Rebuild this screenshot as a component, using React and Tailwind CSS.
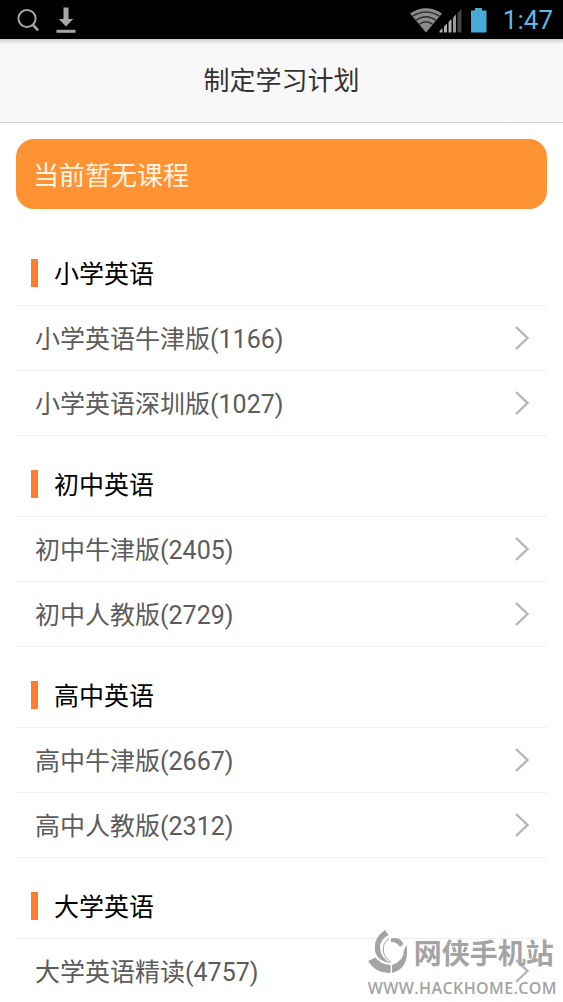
const sections = [
  { title: '小学英语', courses: ['小学英语牛津版(1166)', '小学英语深圳版(1027)'] },
  { title: '初中英语', courses: ['初中牛津版(2405)', '初中人教版(2729)'] },
  { title: '高中英语', courses: ['高中牛津版(2667)', '高中人教版(2312)'] },
  { title: '大学英语', courses: ['大学英语精读(4757)'] },
];

function StatusBar() {
  return (
    <div className="flex h-[39px] shrink-0 items-center justify-between bg-black pr-[10px] pl-[16px]">
      <div className="flex items-center gap-[16px] text-[#a6a6a6]">
        <svg className="h-[24px] w-[24px]" viewBox="0 0 24 24" fill="none" stroke="currentColor" strokeWidth="2">
          <circle cx="11" cy="10.5" r="8.6" />
          <path d="M17 16.8l5 5.6" strokeWidth="2.6" />
        </svg>
        <svg className="h-[26px] w-[20px]" viewBox="0 0 20 26" fill="currentColor">
          <path d="M7.5 0.5h5V12h4.7L10 19.5 2.8 12h4.7z" />
          <path d="M0.5 22.8h19v3h-19z" />
        </svg>
      </div>
      <div className="flex items-center">
        <svg className="h-[26px] w-[78px]" viewBox="0 0 78 26">
          <path d="M1 6.5Q17 -4 33 6.5L17 25.5z" fill="#8c8c8c" />
          <g fill="none" stroke="#303030" strokeWidth="1.4">
            <path d="M3 9.5Q17 0.5 31 9.5" />
            <path d="M6.5 13.5Q17 6 27.5 13.5" />
            <path d="M10 17.5Q17 12 24 17.5" />
          </g>
          <g fill="#b0b0b0">
            <path d="M30.5 25.5v-1.5l3-3v4.5zM35 25.5v-6l3-3v9zM39.5 25.5V15l3-3v13.5z" />
            <path d="M44 25.5V10.5l3-3v18z" fill="#999" />
            <path d="M48.5 25.5V6l4-4v23.5z" fill="#444" />
          </g>
          <path d="M62 3.5h4V1h7v2.5h4.5V25.5H62z" fill="#46a9d6" />
        </svg>
        <time className="ml-[16px] font-['Roboto'] text-[26px] leading-[38px] text-[#5ab9e6]">1:47</time>
      </div>
    </div>
  );
}

function CourseRow({ name }) {
  return (
    <li className="border-b border-[#f0f0f0]">
      <button type="button" className="flex h-16 w-full items-center justify-between pr-[17px] pl-[19px] text-left text-[#5c5c5c]">
        <span className="pt-1">{name}</span>
        <svg className="h-[24px] w-[16px] text-[#b5b5b5]" viewBox="0 0 16 24" fill="none" stroke="currentColor" strokeWidth="2.4" aria-hidden="true">
          <path d="M2 1l11.5 11L2 23" />
        </svg>
      </button>
    </li>
  );
}

function Section({ title, courses }) {
  return (
    <section className="pt-4">
      <h2 className="flex h-[65px] items-center gap-4 border-b border-[#f0f0f0] pl-[15px] text-black">
        <span className="h-7 w-[7px] bg-[#ff7b2e]" />
        <span className="pt-1">{title}</span>
      </h2>
      <ul>
        {courses.map((name) => (
          <CourseRow key={name} name={name} />
        ))}
      </ul>
    </section>
  );
}

function Watermark() {
  return (
    <div className="pointer-events-none absolute right-[6px] bottom-0 flex flex-col text-[#a4a4a4]">
      <div className="flex items-center gap-[6px]">
        <svg className="h-[44px] w-[40px]" viewBox="0 0 40 44" fill="currentColor">
          <path d="M17 0L20.5 5Q12 9 12 18Q13 29 23 33Q11 32 7.5 23Q4 9 17 0z" />
          <path d="M0 31L7.5 27.5Q12 34 22.5 35V43Q8 44 0 31z" />
          <path d="M24 35Q36 31 36 20L38.5 15Q42 38 24 43z" />
          <path d="M23 8.5Q32 6 35.5 14L32 17Q29 12 23 12z" />
          <path d="M21 9Q14 13 15.5 22Q17 29 23 32" fill="none" stroke="currentColor" strokeWidth="1" />
        </svg>
        <span className="font-['Noto_Sans_CJK_SC',sans-serif] text-[28px] leading-[40px] font-bold">网侠手机站</span>
      </div>
      <span className="self-end font-['Open_Sans'] text-[16px] leading-[28px] font-semibold tracking-wide">WWW.HACKHOME.COM</span>
    </div>
  );
}

export default function App() {
  return (
    <div className="relative flex h-screen flex-col overflow-hidden bg-white font-['Roboto','Noto_Sans_CJK_SC',sans-serif] text-[25px] leading-[38px]">
      <StatusBar />
      <header className="flex h-[84px] shrink-0 items-center justify-center border-b border-[#d2d2d2] bg-linear-to-b from-[#cccccc] to-[#f8f8f8] to-[5px]">
        <h1 className="text-[26px] text-[#333]">制定学习计划</h1>
      </header>
      <main className="min-h-0 flex-1 overflow-hidden px-4 pt-4">
        <p className="mb-4 flex h-[70px] items-center rounded-[18px] bg-[#ff9233] px-[17px] pt-1 text-[26px] text-[#fff6e5]">当前暂无课程</p>
        {sections.map((section) => (
          <Section key={section.title} {...section} />
        ))}
      </main>
      <Watermark />
    </div>
  );
}
